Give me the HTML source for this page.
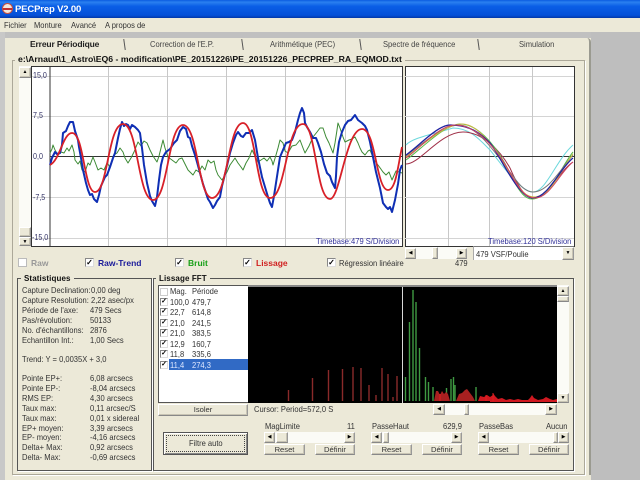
<!DOCTYPE html>
<html><head><meta charset="utf-8"><style>
html,body{margin:0;padding:0;width:640px;height:480px;overflow:hidden;background:#ece9d8}
body{position:relative;font-family:"Liberation Sans",sans-serif;font-size:8.5px;color:#333;filter:blur(.3px)}
div,span{position:absolute;box-sizing:border-box}
span{white-space:nowrap;line-height:10px;transform:scaleX(.89);transform-origin:0 0}
span.b{transform:none}
.btn{background:#ece9d8;border:1px solid;border-color:#fff #999 #888 #fff;text-align:center;color:#333;line-height:9px;font-size:7.6px;box-shadow:inset -1px -1px 0 #c8c4b4}
.trk{background:#fbfbf6}
.ar{font-size:5px;line-height:9px;color:#000}
.cb{width:9px;height:9px;background:#fff;border:1px solid #888;border-right-color:#ddd;border-bottom-color:#ddd;font-size:8px;line-height:7px;text-align:center;color:#000;font-weight:bold}
.s{width:8px;height:8px;font-size:7px;line-height:6px}
.g{border:1px solid #777;box-shadow:1px 1px 0 #fff}
.lg{background:#ece9d8;padding:0 3px;font-weight:bold;color:#111;font-size:8px;transform:none;letter-spacing:.1px}
.tab{top:39px;color:#444}
.y{color:#336;left:33px;font-size:8px}
.m{left:170px}.p{left:192px}
.k{left:22px}.v{left:90px}
</style></head><body>
<div style="left:0;top:0;width:640px;height:18px;background:linear-gradient(#0a5ce0 0,#2a80f0 12%,#0a5ee6 35%,#0450d8 85%,#0338a8 100%)"></div>
<div style="left:2px;top:3px;width:11px;height:11px;border-radius:50%;background:#f2e6dc;border:1px solid #c9503c"></div>
<div style="left:3px;top:8px;width:9px;height:2px;background:#c03030"></div>
<span class="b" style="left:15px;top:4px;font-size:9.5px;font-weight:bold;color:#fff;line-height:12px;letter-spacing:-.15px">PECPrep V2.00</span>
<span style="left:4px;top:20px">Fichier</span><span style="left:34px;top:20px">Monture</span><span style="left:71px;top:20px">Avancé</span><span style="left:105px;top:20px">A propos de</span>
<div style="left:0;top:32px;width:640px;height:6px;background:#c0c0c0"></div>
<div style="left:591px;top:32px;width:49px;height:448px;background:#bebebe"></div>
<div style="left:0;top:32px;width:5px;height:448px;background:#c8c8c8"></div>
<!-- tab page -->
<div style="left:5px;top:38px;width:586px;height:437px;background:#ece9d8;border-right:2px solid #9a9a90;border-top-right-radius:4px;border-top-left-radius:6px"></div>
<div style="left:124px;top:39px;width:1px;height:11px;background:#555;transform:rotate(-8deg)"></div>
<div style="left:242px;top:39px;width:1px;height:11px;background:#555;transform:rotate(-8deg)"></div>
<div style="left:360px;top:39px;width:1px;height:11px;background:#555;transform:rotate(-8deg)"></div>
<div style="left:478px;top:39px;width:1px;height:11px;background:#555;transform:rotate(-8deg)"></div>
<span class="tab b" style="left:30px;font-weight:bold;color:#222;letter-spacing:-.15px">Erreur Périodique</span>
<span class="tab" style="left:150px">Correction de l'E.P.</span>
<span class="tab" style="left:270px">Arithmétique (PEC)</span>
<span class="tab" style="left:383px">Spectre de fréquence</span>
<span class="tab" style="left:519px">Simulation</span>
<!-- group -->
<div class="g" style="left:12px;top:60px;width:573px;height:415px;border-color:#aca899"></div>
<span class="lg" style="left:15px;top:54px;font-size:8.7px;letter-spacing:0">e:\Arnaud\1_Astro\EQ6 - modification\PE_20151226\PE_20151226_PECPREP_RA_EQMOD.txt</span>
<!-- left vertical scroll -->
<div class="trk" style="left:19px;top:66px;width:12px;height:180px"></div>
<div class="btn ar" style="left:19px;top:67px;width:12px;height:11px">▲</div>
<div class="btn" style="left:19px;top:227px;width:12px;height:10px"></div>
<div class="btn ar" style="left:19px;top:237px;width:12px;height:9px;line-height:8px">▼</div>
<!-- plots -->
<svg style="position:absolute;left:0;top:0" width="640" height="480" viewBox="0 0 640 480">
<rect x="31.5" y="66.5" width="371" height="180" fill="#fff" stroke="#333"/>
<rect x="405.5" y="66.5" width="169" height="180" fill="#fff" stroke="#333"/>
<g stroke="#d4d4d4" fill="none">
<path d="M32 76.5H402M32 116.5H402M32 197.5H402M32 238.5H402M405 76.5H574M405 116.5H574M405 197.5H574M405 238.5H574"/>
<path stroke="#c8c8c8" d="M108.5 67V246M167.5 67V246M226.5 67V246M285.5 67V246M345.5 67V246M448.5 67V246M489.5 67V246M532.5 67V246"/>
</g>
<path d="M50 66V246" stroke="#333"/>
<path d="M50 156.5H402M405 156.5H574" stroke="#333"/>
<!-- green -->
<path fill="none" stroke="#3c8a34" stroke-width="1" stroke-linejoin="round" d="M50 153L52 149 53 145 55 150 58 155 61 152 64 153 67 148 69 151 72 145 74 152 75 160 78 164 80 161 82 170 85 172 88 163 90 165 93 157 95 162 98 170 101 168 104 170 107 163 110 167 114 155 117 153 120 148 123 152 125 158 128 163 131 158 134 152 138 142 141 146 144 141 147 143 150 150 153 156 157 162 159 156 161 148 163 140 165 148 168 157 172 160 176 163 179 159 182 158 185 164 188 170 193 175 196 170 199 172 202 166 205 170 208 160 211 163 214 161 216 170 218 175 222 180 227 172 230 165 235 158 238 163 241 167 243 170 246 163 249 158 252 150 255 156 258 162 261 160 264 158 267 161 270 157 272 161 273 165 276 155 278 148 280 140 283 143 285 151 288 153 292 146 296 145 300 140 303 148 305 153 309 146 313 137 317 132 320 128 323 128 326 137 329 143 333 153 335 143 337 130 338 123 340 128 343 137 345 142 349 140 352 139 355 137 358 143 360 148 362 152 365 155 368 151 370 150 374 160 378 165 383 172 386 175 389 172 392 180 396 171 399 172 402 173"/>
<!-- blue -->
<path fill="none" stroke="#0f2fb4" stroke-width="2" stroke-linejoin="round" d="M50 165L52 158 55 152 57 154 60 153 62 145 63 133 66 131 68 126 70 122 73 122 75 131 78 140 79 147 81 158 83 170 86 183 88 190 90 195 92 194 94 199 97 202 99 195 101 186 105 177 107 175 110 167 113 158 115 153 118 138 120 129 122 122 124 126 126 124 128 125 130 129 132 125 135 127 138 130 140 133 142 148 144 165 147 183 150 196 152 201 155 206 157 197 159 180 161 165 163 157 166 152 170 149 174 143 177 140 180 131 183 127 186 129 188 137 190 138 192 146 195 155 197 162 200 173 203 184 205 190 208 199 210 202 213 208 215 205 217 201 220 197 222 186 226 170 230 153 233 143 236 135 238 132 241 136 243 137 246 133 249 133 252 130 255 140 258 158 262 177 265 187 268 197 270 203 272 207 274 196 276 183 278 170 280 157 283 150 286 143 289 142 292 140 295 132 298 120 300 113 302 108 304 113 305 123 307 127 310 132 313 138 316 138 318 143 321 152 324 164 327 173 330 176 332 182 335 188 336 176 337 157 339 142 342 132 345 125 348 121 351 120 355 115 358 120 362 123 365 126 367 130 370 142 373 157 376 172 380 188 383 203 386 207 388 209 390 207 392 212 395 200 398 184 400 170 402 165"/>
<!-- red -->
<path fill="none" stroke="#d82028" stroke-width="1.8" d="M50 165C60 160 63 133 72 133C84 133 84 192 95 192C108 192 108 124 123 124C138 124 138 200 153 200C168 200 168 125 183 125C198 125 198 198 212 198C228 198 228 123 243 123C256 123 256 198 270 198C286 198 286 124 303 124C316 124 316 199 330 199C340 199 346 129 362 129C376 129 376 190 388 190C396 190 398 165 402 147"/>
<!-- right curves -->
<g fill="none" stroke-width="1">
<path stroke="#6cd8dc" d="M406 145C412 138 430 135 453 128C470 128 480 140 490 150C500 162 520 192 533 192C546 192 556 160 573 145"/>
<path stroke="#a03048" d="M406 164C420 164 440 132 463 132C482 132 500 150 510 168C516 182 524 198 533 198C548 198 560 170 573 162"/>
<path stroke="#5ab848" d="M406 160C420 150 445 124 460 124C480 124 500 150 513 180C520 192 525 199 532 199C550 199 560 168 573 152"/>
<path stroke="#777" d="M406 156C420 145 445 124 460 125C480 127 500 160 513 176C520 186 526 192 533 192C548 192 560 170 573 155"/>
<path stroke="#c8b840" d="M406 157C420 147 445 124 462 124C482 124 500 158 513 178C520 190 526 197 534 197C550 197 560 172 573 154"/>
<path stroke="#2020a0" stroke-width="1.3" d="M406 155C420 145 438 125 450 125C470 125 480 133 490 143C500 155 518 198 533 198C548 198 560 168 573 158"/>
<path stroke="#d04060" d="M406 158C420 148 440 125 455 125C478 125 498 150 513 178C520 190 526 198 535 198C550 198 560 172 573 162"/>
</g>
<!-- FFT -->
<rect x="248" y="287" width="309" height="116" fill="#000"/>
<rect x="248" y="285" width="309" height="2" fill="#888"/>
<g stroke="#8a2a2a" stroke-width="1.400" fill="none">
<path d="M288.500 401V390M312.500 401V378M328.500 401V370M342.500 401V369M353 401V367M361 401V368M369 401V385M376 401V395M382 401V368M388 401V374M393 401V397M397 401V376"/>
</g>
<g stroke="#3f9a42" stroke-width="1.400" fill="none">
<path d="M405.500 401V377M409.500 401V322M413 401V290M416 401V302M419.500 401V348M425.500 401V377M428.500 401V382M433 401V387M446.500 401V388M451 401V379M453.500 401V377M455 401V385M476 401V387"/>
</g>
<path d="M402.500 287V403" stroke="#d8d8d8"/>
<path fill="#a82020" d="M434 401L436 391 438 391 440 395 442 391 444 394 446 392 448 394 450 401ZM456 401L459 394 462 393 465 390 467 389 470 393 473 397 475 401Z"/>
<path fill="#d01820" d="M478 401L480 396 484 397 487 395 490 397 493 395 495 401ZM490 401L492 397 493 393 495 396 498 399 502 398 506 400 510 399 514 400 518 399 522 400 528 400 530 398 532 395 534 398 538 400 543 399 546 397 550 399 553 400 557 399V402H490Z"/>
<path d="M440 401V394M486 401V395M493 401V393" stroke="#e02020"/>
</svg>
<!-- plot labels -->
<span class="y" style="top:71px">15,0</span><span class="y" style="top:111px">7,5</span><span class="y" style="top:152px">0,0</span><span class="y" style="top:193px">-7,5</span><span class="y" style="top:233px;left:32px">-15,0</span>
<span style="left:316px;top:236px;color:#32329a">Timebase:479 S/Division</span>
<span style="left:488px;top:236px;color:#32329a">Timebase:120 S/Division</span>
<!-- right slider -->
<div class="trk" style="left:405px;top:247px;width:62px;height:12px"></div>
<div class="btn ar" style="left:405px;top:248px;width:11px;height:11px">◀</div>
<div class="btn" style="left:432px;top:247px;width:6px;height:12px"></div>
<div class="btn ar" style="left:456px;top:248px;width:11px;height:11px">▶</div>
<span style="left:455px;top:258px">479</span>
<div style="left:473px;top:246px;width:101px;height:14px;background:#fff;border-top:1px solid #777;border-left:1px solid #aaa"></div>
<span style="left:476px;top:249px">479 VSF/Poulie</span>
<div class="btn ar" style="left:562px;top:247px;width:12px;height:13px;line-height:11px">▼</div>
<!-- checkboxes -->
<div class="cb" style="left:18px;top:258px;border-color:#bbb"></div><span class="b" style="left:31px;top:258px;color:#999;font-weight:bold">Raw</span>
<div class="cb" style="left:85px;top:258px">✓</div><span class="b" style="left:98px;top:258px;color:#1a1a9a;font-weight:bold">Raw-Trend</span>
<div class="cb" style="left:175px;top:258px">✓</div><span class="b" style="left:188px;top:258px;color:#18a018;font-weight:bold">Bruit</span>
<div class="cb" style="left:243px;top:258px">✓</div><span class="b" style="left:256px;top:258px;color:#d02020;font-weight:bold">Lissage</span>
<div class="cb" style="left:327px;top:258px">✓</div><span style="left:339px;top:258px">Régression linéaire</span>
<!-- statistiques -->
<div class="g" style="left:17px;top:278px;width:135px;height:193px;border-color:#555"></div>
<span class="lg" style="left:21px;top:274px">Statistiques</span>
<span class="k" style="top:285px">Capture Declination:</span><span style="left:91px;top:285px">0,00 deg</span>
<span class="k" style="top:295px">Capture Resolution:</span><span style="left:91px;top:295px">2,22 asec/px</span>
<span class="k" style="top:305px">Période de l'axe:</span><span class="v" style="top:305px">479 Secs</span>
<span class="k" style="top:315px">Pas/révolution:</span><span class="v" style="top:315px">50133</span>
<span class="k" style="top:325px">No. d'échantillons:</span><span class="v" style="top:325px">2876</span>
<span class="k" style="top:335px">Echantillon Int.:</span><span class="v" style="top:335px">1,00 Secs</span>
<span class="k" style="top:354px">Trend: Y = 0,0035X + 3,0</span>
<span class="k" style="top:373px">Pointe EP+:</span><span class="v" style="top:373px">6,08 arcsecs</span>
<span class="k" style="top:383px">Pointe EP-:</span><span class="v" style="top:383px">-8,04 arcsecs</span>
<span class="k" style="top:393px">RMS EP:</span><span class="v" style="top:393px">4,30 arcsecs</span>
<span class="k" style="top:403px">Taux max:</span><span class="v" style="top:403px">0,11 arcsec/S</span>
<span class="k" style="top:413px">Taux max:</span><span class="v" style="top:413px">0,01 x sidereal</span>
<span class="k" style="top:423px">EP+ moyen:</span><span class="v" style="top:423px">3,39 arcsecs</span>
<span class="k" style="top:432px">EP- moyen:</span><span class="v" style="top:432px">-4,16 arcsecs</span>
<span class="k" style="top:442px">Delta+ Max:</span><span class="v" style="top:442px">0,92 arcsecs</span>
<span class="k" style="top:452px">Delta- Max:</span><span class="v" style="top:452px">-0,69 arcsecs</span>
<!-- lissage -->
<div class="g" style="left:153px;top:278px;width:421px;height:193px;border-color:#555"></div>
<span class="lg" style="left:156px;top:274px">Lissage FFT</span>
<div style="left:158px;top:285px;width:90px;height:118px;background:#fff;border:1px solid #555;border-right:none"></div>
<div style="left:169px;top:359px;width:79px;height:10.500px;background:#316ac5"></div>
<div class="cb s" style="left:160px;top:288px;border-color:#ccc"></div><span class="m" style="top:286px">Mag.</span><span class="p" style="top:286px">Période</span>
<div class="cb s" style="left:160px;top:298px">✓</div><span class="m" style="top:296.500px">100,0</span><span class="p" style="top:296.500px">479,7</span>
<div class="cb s" style="left:160px;top:308px">✓</div><span class="m" style="top:307px">22,7</span><span class="p" style="top:307px">614,8</span>
<div class="cb s" style="left:160px;top:319px">✓</div><span class="m" style="top:317.500px">21,0</span><span class="p" style="top:317.500px">241,5</span>
<div class="cb s" style="left:160px;top:329px">✓</div><span class="m" style="top:328px">21,0</span><span class="p" style="top:328px">383,5</span>
<div class="cb s" style="left:160px;top:340px">✓</div><span class="m" style="top:338.500px">12,9</span><span class="p" style="top:338.500px">160,7</span>
<div class="cb s" style="left:160px;top:350px">✓</div><span class="m" style="top:349px">11,8</span><span class="p" style="top:349px">335,6</span>
<div class="cb s" style="left:160px;top:361px">✓</div><span class="m" style="top:359.500px;color:#dfe8ff">11,4</span><span class="p" style="top:359.500px;color:#dfe8ff">274,3</span>
<div class="btn" style="left:158px;top:404px;width:90px;height:12px">Isoler</div>
<span style="left:254px;top:404px">Cursor: Period=572,0 S</span>
<!-- fft scrollbars -->
<div class="trk" style="left:557px;top:285px;width:12px;height:118px"></div>
<div class="btn ar" style="left:557px;top:286px;width:12px;height:10px;line-height:8px">▲</div>
<div class="btn" style="left:557px;top:296px;width:12px;height:6px"></div>
<div class="btn ar" style="left:557px;top:393px;width:12px;height:10px;line-height:8px">▼</div>
<div class="trk" style="left:433px;top:404px;width:124px;height:11px"></div>
<div class="btn ar" style="left:433px;top:404px;width:12px;height:11px">◀</div>
<div class="btn" style="left:464px;top:404px;width:5px;height:11px"></div>
<div class="btn ar" style="left:545px;top:404px;width:12px;height:11px">▶</div>
<!-- filtre auto -->
<div style="left:163px;top:432px;width:85px;height:23px;background:#ece9d8;border:1px solid #555;box-shadow:inset 1px 1px 0 #fff,inset -1px -1px 0 #888"></div>
<div style="left:166px;top:435px;width:79px;height:17px;border:1px dotted #444"></div>
<span style="left:189px;top:438px">Filtre auto</span>
<!-- MagLimite -->
<span style="left:265px;top:421px">MagLimite</span><span style="left:347px;top:421px">11</span>
<div class="trk" style="left:264px;top:432px;width:90px;height:11px"></div>
<div class="btn ar" style="left:264px;top:432px;width:11px;height:11px">◀</div>
<div class="btn" style="left:276px;top:432px;width:12px;height:11px"></div>
<div class="btn ar" style="left:344px;top:432px;width:11px;height:11px">▶</div>
<div class="btn" style="left:264px;top:444px;width:41px;height:11px">Reset</div>
<div class="btn" style="left:315px;top:444px;width:40px;height:11px">Définir</div>
<!-- PasseHaut -->
<span style="left:372px;top:421px">PasseHaut</span><span style="left:443px;top:421px">629,9</span>
<div class="trk" style="left:371px;top:432px;width:90px;height:11px"></div>
<div class="btn ar" style="left:371px;top:432px;width:11px;height:11px">◀</div>
<div class="btn" style="left:383px;top:432px;width:6px;height:11px"></div>
<div class="btn ar" style="left:451px;top:432px;width:11px;height:11px">▶</div>
<div class="btn" style="left:371px;top:444px;width:41px;height:11px">Reset</div>
<div class="btn" style="left:422px;top:444px;width:40px;height:11px">Définir</div>
<!-- PasseBas -->
<span style="left:479px;top:421px">PasseBas</span><span style="left:546px;top:421px">Aucun</span>
<div class="trk" style="left:478px;top:432px;width:90px;height:11px"></div>
<div class="btn ar" style="left:478px;top:432px;width:11px;height:11px">◀</div>
<div class="btn" style="left:553px;top:432px;width:5px;height:11px"></div>
<div class="btn ar" style="left:558px;top:432px;width:11px;height:11px">▶</div>
<div class="btn" style="left:478px;top:444px;width:41px;height:11px">Reset</div>
<div class="btn" style="left:529px;top:444px;width:40px;height:11px">Définir</div>
</body></html>
